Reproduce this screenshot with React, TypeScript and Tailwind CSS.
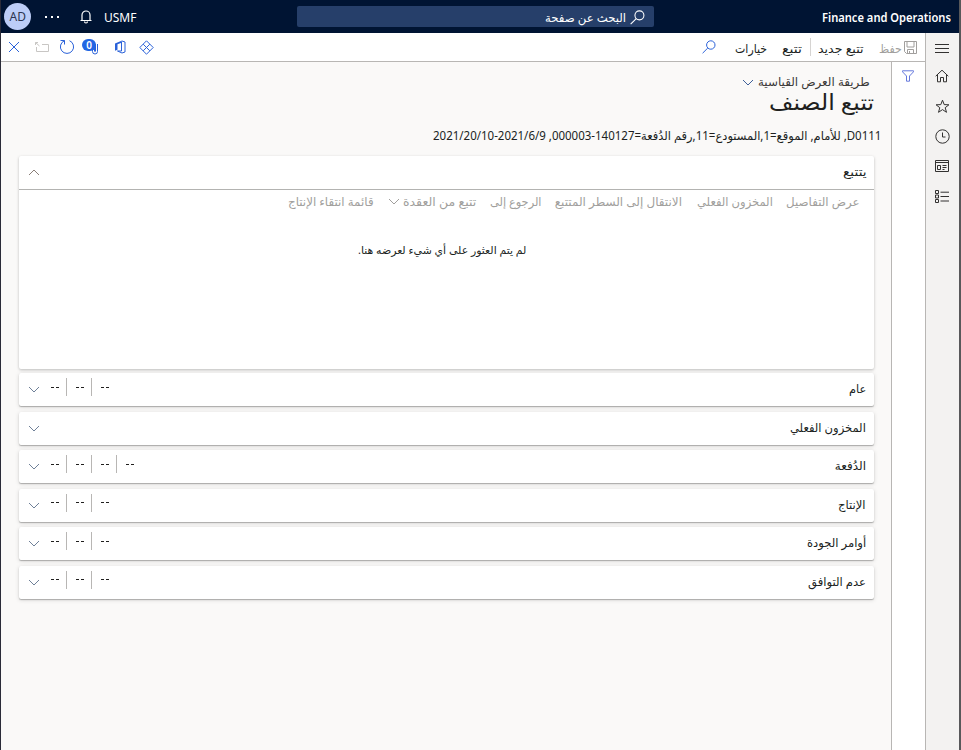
import { useLayoutEffect, useRef, useState } from "react";
import type { ReactNode } from "react";

// Single-line label that condenses or widens its text to fill its slot.
function Label({ children, className, rtl = true }: { children: ReactNode; className: string; rtl?: boolean }) {
  const outer = useRef<HTMLSpanElement>(null);
  const inner = useRef<HTMLSpanElement>(null);
  const [scale, setScale] = useState(1);
  useLayoutEffect(() => {
    if (outer.current && inner.current) {
      setScale(outer.current.clientWidth / inner.current.offsetWidth);
    }
  }, []);
  return (
    <span ref={outer} dir={rtl ? "rtl" : "ltr"} className={`block shrink-0 whitespace-nowrap ${className}`}>
      <span
        ref={inner}
        className={`inline-block ${rtl ? "origin-right" : "origin-left"}`}
        style={{ transform: `scaleX(${scale})` }}
      >
        {children}
      </span>
    </span>
  );
}

function Chevron({ up = false, className = "" }: { up?: boolean; className?: string }) {
  return (
    <svg width="12" height="7" viewBox="0 0 12 7" fill="none" stroke="currentColor" className={`shrink-0 ${className}`}>
      <path d={up ? "M1 6 6 1l5 5" : "M1 1l5 5 5-5"} />
    </svg>
  );
}

function Magnifier({ size, className = "" }: { size: number; className?: string }) {
  return (
    <svg width={size} height={size} viewBox="0 0 14 14" fill="none" stroke="currentColor" className={`shrink-0 ${className}`}>
      <circle cx="8.8" cy="5" r="4.2" />
      <path d="M5.8 8 .6 13.2" />
    </svg>
  );
}

function TopBar() {
  return (
    <header className="flex h-[33px] shrink-0 items-center bg-[#001433] text-white">
      <div className="ml-[3px] flex size-[27px] items-center justify-center rounded-full bg-[#bccdf7] text-[#2d3550]">
        <Label rtl={false} className="w-[16px] text-[12px]">AD</Label>
      </div>
      <div className="ml-[14px] flex gap-[4px]">
        <i className="size-[2px] bg-white" />
        <i className="size-[2px] bg-white" />
        <i className="size-[2px] bg-white" />
      </div>
      <svg width="12" height="14" viewBox="0 0 12 14" fill="none" stroke="currentColor" className="ml-[21px]">
        <path d="M.5 10.5h11M2 10.5V5a4 4 0 0 1 8 0v5.500M4.500 11.500a1.500 1.500 0 0 0 3 0" strokeWidth="1.2" />
      </svg>
      <Label rtl={false} className="ml-[12px] w-[32px] pt-[2px] text-[12px]">USMF</Label>
      <div className="ml-[161px] flex h-[21px] w-[357px] flex-row-reverse items-center rounded-[2px] bg-[#263f6a]">
        <Magnifier size={15} className="mr-[9px] mt-[2px]" />
        <Label className="mr-[4px] w-[81px] pt-[2px] text-[12px]">البحث عن صفحة</Label>
      </div>
      <Label rtl={false} className="ml-[168px] w-[129px] pt-[2px] text-[12px] font-semibold">Finance and Operations</Label>
    </header>
  );
}

function ActionBar() {
  return (
    <div className="flex h-[29px] shrink-0 items-center border-b border-[#b8b6b4] bg-white text-[#2b62d9]">
      <svg width="12" height="12" viewBox="0 0 12 12" fill="none" stroke="currentColor" className="ml-[7px]">
        <path d="M1 1l10 10M11 1 1 11" />
      </svg>
      <svg width="14" height="12" viewBox="0 0 14 12" fill="none" stroke="#c8c6c4" className="ml-[15px]">
        <path d="M1.500 6v4.500h12v-7H7M.500 4V1.500H3M.500 1.500l4 3.500" />
      </svg>
      <svg width="16" height="16" viewBox="0 0 16 16" fill="none" stroke="currentColor" className="ml-[10px]">
        <path d="M10.500 1.700a6.600 6.600 0 1 1-5 0M1.500 1.500h4v4" />
      </svg>
      <div className="relative ml-[8px] h-[18px] w-[18px]">
        <svg width="18" height="18" viewBox="0 0 18 18" fill="none" stroke="currentColor">
          <path d="M14.500 6v7.500a2.500 2.500 0 0 1-5 0V7M11.500 7v6a.5.5 0 0 0 1 0V6" />
        </svg>
        <span className="absolute -left-px top-px flex h-[12px] w-[14px] items-center justify-center rounded-full bg-[#2266e3] text-[10px] font-semibold leading-none text-white">0</span>
      </div>
      <svg width="12" height="14" viewBox="0 0 12 14" fill="none" className="ml-[13px]">
        <path d="M1 3.500 7 1v2L3.500 4.300v5.400L1 10.800z" fill="currentColor" />
        <path d="M7 1.500 8 1l3 1v10l-3 1-4.500-2M3.500 11H7.500V2" stroke="currentColor" />
      </svg>
      <svg width="15" height="15" viewBox="0 0 15 15" fill="none" stroke="currentColor" className="ml-[13px]">
        <path d="M7.500.8l6.700 6.700-6.700 6.700L.8 7.500zM4.200 4.200l6.600 6.600M10.800 4.200l-6.600 6.600" />
      </svg>
      <Magnifier size={14} className="ml-auto" />
      <div className="ml-[19px] flex items-center pt-[4px] text-[12px] leading-none text-[#201f1e]">
        <Label className="w-[32px]">خيارات</Label>
        <Label className="ml-[15px] w-[20px]">تتبع</Label>
        <i className="-mt-[4px] ml-[8px] h-[18px] w-px bg-[#d6d4d2]" />
        <Label className="ml-[7px] w-[45px]">تتبع جديد</Label>
        <Label className="ml-[16px] w-[23px] text-[#a19f9d]">حفظ</Label>
      </div>
      <svg width="13" height="13" viewBox="0 0 13 13" fill="none" stroke="#a19f9d" className="ml-[2px] mr-[8px]">
        <path d="M.5.5h12v12h-10l-2-2zM3 .5V6h7V.500M3.500 12.500v-4h6v4M5.500 10v2.500" />
      </svg>
    </div>
  );
}

function TraceCard() {
  return (
    <section className="h-[213px] rounded-[2px] bg-white shadow-[0_1px_3px_rgba(0,0,0,0.25)]">
      <div className="flex h-[34px] items-center border-b border-[#b3b3b1] pl-[9px] pr-[7px]">
        <Chevron up className="text-[#8a7e78]" />
        <Label className="-mt-px ml-auto w-[24px] text-[12px] font-medium">يتتبع</Label>
      </div>
      <div className="flex h-[23px] items-center pl-[269px] text-[12px] text-[#a19f9d]">
        <Label className="w-[86px]">قائمة انتقاء الإنتاج</Label>
        <Chevron className="ml-[14px]" />
        <Label className="ml-[3px] w-[73px]">تتبع من العقدة</Label>
        <Label className="ml-[14px] w-[52px]">الرجوع إلى</Label>
        <Label className="ml-[13px] w-[127px]">الانتقال إلى السطر المتتبع</Label>
        <Label className="ml-[15px] w-[76px]">المخزون الفعلي</Label>
        <Label className="ml-[13px] w-[74px]">عرض التفاصيل</Label>
      </div>
      <Label className="ml-[339px] mt-[29px] w-[168px] text-[11px]">لم يتم العثور على أي شيء لعرضه هنا.</Label>
    </section>
  );
}

function FastTab({ title, width, fields }: { title: string; width: string; fields: number }) {
  return (
    <section className="flex h-[33px] items-center rounded-[2px] bg-white pl-[9px] pr-[8px] shadow-[0_1px_1px_rgba(0,0,0,0.25),0_1px_4px_rgba(0,0,0,0.15)]">
      <Chevron className="text-[#6f8098]" />
      <div className="-mt-[5px] ml-[2px] flex">
        {Array.from({ length: fields }, (_, i) => (
          <div key={i} className={`flex h-[18px] w-[25px] items-center gap-[2px] pl-[9px] ${i < fields - 1 ? "border-r border-[#b8b6b4]" : ""}`}>
            <i className="h-px w-[3px] bg-[#201f1e]" />
            <i className="h-px w-[3px] bg-[#201f1e]" />
          </div>
        ))}
      </div>
      <Label className={`-mt-px ml-auto text-[12px] font-medium ${width}`}>{title}</Label>
    </section>
  );
}

function NavRail() {
  return (
    <nav className="flex w-[34px] shrink-0 flex-col items-center border-l border-[#b8b6b4] bg-[#f3f2f1] pr-px pt-[10px] text-[#323130]">
      <svg width="14" height="11" viewBox="0 0 14 11" stroke="currentColor">
        <path d="M0 1.500h14M0 5.500h14M0 9.500h14" />
      </svg>
      <svg width="14" height="14" viewBox="0 0 14 14" fill="none" stroke="currentColor" className="mt-[15px]">
        <path d="M.7 7.200 7 1.200l6.300 6M2.500 5.800v7h3V8.500h3v4.300h3v-7" />
      </svg>
      <svg width="15" height="15" viewBox="0 0 15 15" fill="none" stroke="currentColor" className="mt-[16px]">
        <path d="M7.500 1.200l1.700 4.400 4.700.2-3.700 2.900 1.300 4.600-4-2.700-4 2.700 1.300-4.600L1.100 5.800l4.700-.2z" />
      </svg>
      <svg width="15" height="15" viewBox="0 0 15 15" fill="none" stroke="currentColor" className="mt-[15px]">
        <circle cx="7.500" cy="7.500" r="6.700" />
        <path d="M7.500 3.500v4.500h3" />
      </svg>
      <svg width="14" height="12" viewBox="0 0 14 12" fill="none" stroke="currentColor" className="mt-[16px]">
        <path d="M.5.500h13v11H.500zM.5 2.500h13M2.500 5.500h3v4h-3zM7.500 5.500h4M7.500 7.500h4M7.500 9.500h2" />
      </svg>
      <svg width="14" height="13" viewBox="0 0 14 13" fill="none" stroke="currentColor" className="mt-[18px]">
        <path d="M.5.500h3v3h-3zM.5 5h3v3h-3zM.5 9.500h3v3h-3zM5.500 2.200H14M5.500 6.500H14M5.500 11H14" />
      </svg>
    </nav>
  );
}

export default function App() {
  return (
    <div className="flex h-[750px] w-[961px] flex-col overflow-hidden border-l border-r-2 border-l-[#2a2b38] border-r-[#58585a] bg-[#faf9f8] font-['Noto_Sans','DejaVu_Sans',sans-serif] text-[#201f1e]">
      <TopBar />
      <div className="flex min-h-0 flex-1">
        <div className="flex min-w-0 flex-1 flex-col">
          <ActionBar />
          <div className="flex min-h-0 flex-1">
            <main className="min-w-0 flex-1 pl-[18px]">
              <div className="mt-[12px] flex h-[16px] items-center justify-end pr-[21px] text-[#3b3a39]">
                <Chevron className="mr-[4px] text-[#3f6099]" />
                <Label className="w-[112px] text-[12px] leading-[14px]">طريقة العرض القياسية</Label>
              </div>
              <h1 className="flex h-[22px] items-center justify-end pr-[17px]">
                <Label className="w-[105px] text-[22px] font-medium leading-[22px]">تتبع الصنف</Label>
              </h1>
              <div className="mt-[15px] flex h-[18px] items-center justify-end pr-[10px]">
                <Label className="w-[448px] text-[12px]">D0111, للأمام, الموقع=1,المستودع=11,رقم الدُفعة=140127-000003, 2021/6/9-2021/20/10</Label>
              </div>
              <div className="mr-[17px] mt-[11px]">
                <TraceCard />
                <div className="mt-[4px] flex flex-col gap-[5.5px]">
                  <FastTab title="عام" width="w-[17px]" fields={3} />
                  <FastTab title="المخزون الفعلي" width="w-[76px]" fields={0} />
                  <FastTab title="الدُفعة" width="w-[31px]" fields={4} />
                  <FastTab title="الإنتاج" width="w-[28px]" fields={3} />
                  <FastTab title="أوامر الجودة" width="w-[59px]" fields={3} />
                  <FastTab title="عدم التوافق" width="w-[58px]" fields={3} />
                </div>
              </div>
            </main>
            <aside className="flex w-[34px] shrink-0 justify-center border-l border-[#b8b6b4] bg-white pr-px pt-[8px]">
              <svg width="12" height="12" viewBox="0 0 12 12" fill="none" stroke="#6478dc">
                <path d="M.5.800h11v1L7.500 6v5.200h-3V6L.500 1.800z" />
              </svg>
            </aside>
          </div>
        </div>
        <NavRail />
      </div>
    </div>
  );
}
